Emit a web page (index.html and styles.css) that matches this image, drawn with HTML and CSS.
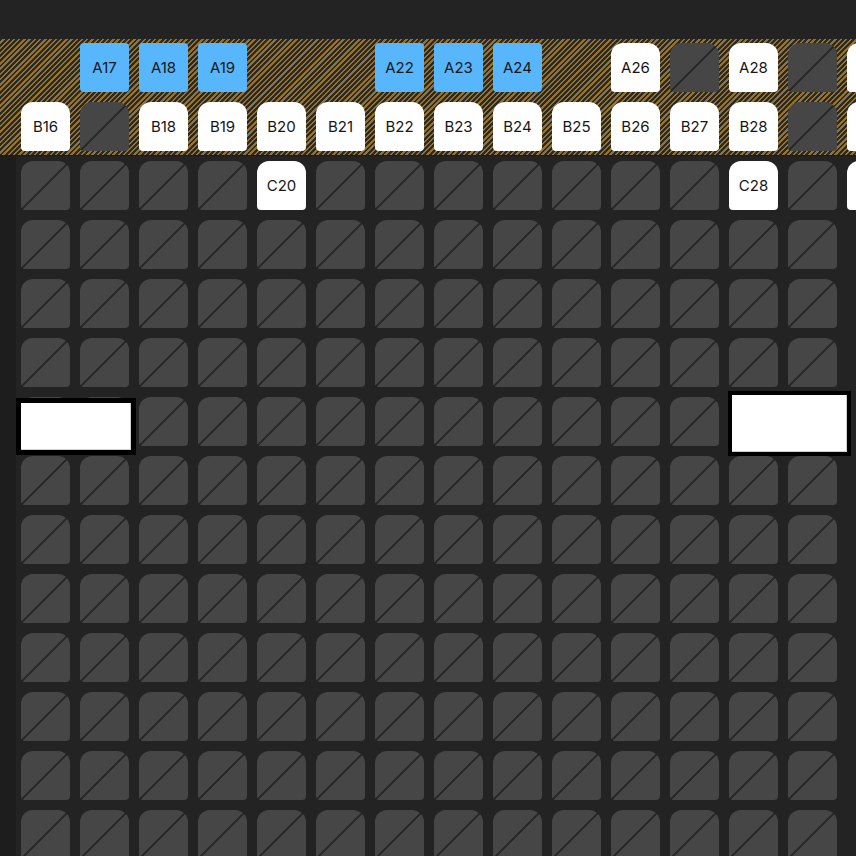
FILE: index.html
```html
<!DOCTYPE html>
<html lang="en">
<head>
  <meta charset="UTF-8" />
  <meta name="viewport" content="width=device-width, initial-scale=1" />
  <title>Seat map</title>
  <link rel="stylesheet" href="styles.css">
</head>
<body>
  <div class="topbar"></div>

  <div class="map" id="map">
    <div class="zone" id="zone"></div>
    <div class="hall" id="hall"></div>

    <div class="tip tip-left"></div>
    <div class="tip tip-right"></div>
  </div>

  <script>
    // _ = no seat, b = selected, w = free, g = taken, e = free seat past the edge
    const FIRST = 16;
    const filas = {
      A: "_bbb__bbb_wgwge",
      B: "wgwwwwwwwwwwwge",
      C: "ggggwgggggggwge"
    };
    "DEFGHIJKLMN".split("").forEach(l => filas[l] = "gggggggggggggg_");

    function pintarFila(letra, destino) {
      const fila = document.createElement("div");
      fila.className = "row";
      filas[letra].split("").forEach((tipo, i) => {
        const seat = document.createElement("div");
        if (tipo === "_") {
          seat.className = "seat empty";
        } else if (tipo === "g") {
          seat.className = "seat taken";
        } else if (tipo === "e") {
          seat.className = "seat free";
        } else {
          seat.className = "seat " + (tipo === "b" ? "selected" : "free");
          seat.innerText = letra + (FIRST + i);
        }
        fila.appendChild(seat);
      });
      destino.appendChild(fila);
    }

    const zone = document.getElementById("zone");
    const hall = document.getElementById("hall");
    Object.keys(filas).forEach(letra => {
      pintarFila(letra, letra === "A" || letra === "B" ? zone : hall);
    });
  </script>
</body>
</html>
```

FILE: styles.css
```css
:root {
  --fondo: #1d1d1d;
  --sala: #232323;
  --ocupado: #464646;
  --raya: #262626;
  --elegido: #58b6fd;
  --texto: #161616;
}
body {
  margin: 0;
  background: var(--fondo);
  font-family: Inter, "Noto Sans", sans-serif;
  overflow: hidden;
}
.topbar {
  height: 39px;
  background: #232323;
}
.map {
  position: relative;
  height: 817px;
  overflow: hidden;
}
.zone {
  display: flex;
  flex-direction: column;
  gap: 10px;
  padding: 4px 0 4px 21px;
  background: repeating-linear-gradient(135deg, #2a2926 0 2px, #94722f 2px 3.7px);
  border-bottom: 1px solid #1a1a1a;
}
.hall {
  display: flex;
  flex-direction: column;
  gap: 10px;
  margin-left: 16px;
  padding: 5px 0 0 5px;
  background: var(--sala);
  min-height: 900px;
}
.row {
  display: flex;
  gap: 10px;
}
.seat {
  flex: 0 0 49px;
  height: 49px;
  box-sizing: border-box;
  display: flex;
  align-items: center;
  justify-content: center;
  font-size: 15px;
  color: var(--texto);
  border-radius: 12px 12px 4px 4px;
}
.seat.empty {
  background: transparent;
}
.seat.free {
  background: #fff;
}
.seat.selected {
  background: var(--elegido);
  border-radius: 4px;
}
.seat.taken {
  background:
    linear-gradient(to bottom right, transparent calc(50% - 1.2px), var(--raya) calc(50% - 0.6px), var(--raya) calc(50% + 0.6px), transparent calc(50% + 1.2px)),
    var(--ocupado);
}
.tip {
  position: absolute;
  background: #fff;
  border: 5px solid #000;
  box-sizing: border-box;
  box-shadow: inset -1px -1px 0 #d0d0d0;
}
.tip-left {
  left: 16px;
  top: 359px;
  width: 120px;
  height: 57px;
}
.tip-right {
  left: 728px;
  top: 352px;
  width: 123px;
  height: 65px;
  border-width: 4px;
}
```
